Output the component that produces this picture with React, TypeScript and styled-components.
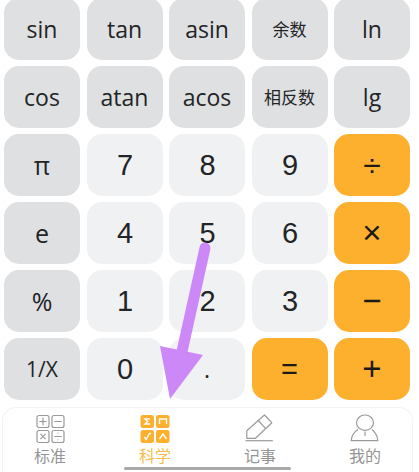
import styled, { createGlobalStyle } from "styled-components";

const GlobalStyle = createGlobalStyle`
    html, body {
        margin: 0;
        padding: 0;
        background: #fff;
        overflow: hidden;
    }
`

const Screen = styled.div`
    position: relative;
    width: 419px;
    height: 472px;
    overflow: hidden;
    display: flex;
    flex-direction: column;
    background: #fff;
    font-family: "Open Sans", "Noto Sans", "Noto Sans CJK SC", sans-serif;
`

const Keypad = styled.div`
    display: grid;
    grid-template-columns: repeat(5, 76px);
    grid-auto-rows: 62px;
    column-gap: 6.5px;
    row-gap: 6px;
    padding-left: 4px;
    margin-top: -2px;
`

type KeyKind = "fn" | "num" | "op"

const keyColors: Record<KeyKind, string> = {
    fn: "#dfe0e2",
    num: "#f0f1f3",
    op: "#fdb02d"
}

const Key = styled.div<{ $kind: KeyKind, $size?: number, $cjk?: boolean }>`
    display: flex;
    align-items: center;
    justify-content: center;
    border-radius: 15px;
    color: #222426;
    background-color: ${props => keyColors[props.$kind]};
    font-size: ${props => props.$size ?? 23}px;
    padding-bottom: ${props => props.$cjk ? 2 : 0}px;
    font-family: ${props => props.$cjk
        ? `"Noto Sans CJK SC", sans-serif`
        : `"Open Sans", "Noto Sans", sans-serif`};
`

const Digit = styled(Key)`
    font-family: "Liberation Sans", sans-serif;
    font-size: 29px;
    padding-left: 1px;
`

const Operator = styled(Key)`
    font-family: "Liberation Sans", sans-serif;
    color: #1c1a16;
`

const TabBar = styled.div`
    display: grid;
    grid-template-columns: repeat(4, 105px);
    justify-content: center;
    margin: 7px 6px 0 2px;
    height: 70px;
    border-top: 1px solid #f3f3f4;
    border-left: 1px solid #f3f3f4;
    border-right: 1px solid #f3f3f4;
    border-radius: 14px 14px 0 0;
    background: #fff;
`

const Tab = styled.div<{ $active?: boolean }>`
    display: flex;
    flex-direction: column;
    align-items: center;
    padding-top: 6px;
    color: ${props => props.$active ? "#f5bd4c" : "#959595"};
`

const TabLabel = styled.div`
    font-family: "Noto Sans CJK SC", sans-serif;
    font-size: 16px;
    line-height: 18px;
    margin-top: 2px;
`

const TabIcon = styled.svg`
    width: 30px;
    height: 30px;
    display: block;
`

const HomeIndicator = styled.div`
    position: absolute;
    left: 124px;
    bottom: 2px;
    width: 167px;
    height: 3px;
    border-radius: 2px;
    background: #a9a9a9;
`

const ArrowOverlay = styled.svg`
    position: absolute;
    left: 0;
    top: 0;
    width: 419px;
    height: 472px;
    pointer-events: none;
`

function StandardIcon() {
    return <TabIcon viewBox="0 0 30 30" fill="none" stroke="#9a9a9a" strokeWidth="1.2">
        <rect x="2" y="1.5" width="12" height="12" rx="2" />
        <rect x="17" y="1.5" width="12" height="12" rx="2" />
        <rect x="2" y="16.5" width="12" height="12" rx="2" />
        <rect x="17" y="16.5" width="12" height="12" rx="2" />
        <path d="M4.3 7.5h7.4M8 3.8v7.4M19.3 7.5h7.4M5.4 19.9l5.2 5.2M10.6 19.9l-5.2 5.2M19.3 22.5h7.4M23 18.8v.8M23 25.4v.8" />
    </TabIcon>
}

function ScienceIcon() {
    return <TabIcon viewBox="0 0 30 30" fill="none">
        <rect x="0.5" y="1" width="13.5" height="13" rx="2.5" fill="#fdb02d" />
        <rect x="16" y="1" width="13.5" height="13" rx="2.5" fill="#fdb02d" />
        <rect x="0.5" y="16" width="13.5" height="13" rx="2.5" fill="#fdb02d" />
        <rect x="16" y="16" width="13.5" height="13" rx="2.5" fill="#fdb02d" />
        <g stroke="#fff" strokeWidth="1.4">
            <path d="M10 5H5l2.6 2.5L5 10h5" />
            <path d="M19.5 10V5h7v5" />
            <path d="M4.5 23l1.6 2.5L9.5 19.5H11" />
            <path d="M19.5 25l3.5-5 3.5 5" />
        </g>
    </TabIcon>
}

function NoteIcon() {
    return <TabIcon viewBox="0 0 30 30" fill="none" stroke="#9a9a9a" strokeWidth="1.2" strokeLinejoin="round">
        <path d="M1.8 16.7L19.5 1l7.3 7.7L10.5 24.3H1.8z" />
        <path d="M12.8 6l7.7 8.3" />
        <path d="M0.5 26.7h27.3" />
    </TabIcon>
}

function ProfileIcon() {
    return <TabIcon viewBox="0 0 30 30" fill="none" stroke="#9a9a9a" strokeWidth="1.2">
        <ellipse cx="15" cy="8.7" rx="8.5" ry="7.7" />
        <path d="M8 15.5C4 18 1.5 22 1.2 26.7h26.6C27.5 22 25 18 22 15.5" />
        <path d="M15 17.5v4.5" />
    </TabIcon>
}

export default function App() {
    return <Screen>
        <GlobalStyle />
        <Keypad>
            <Key $kind="fn">sin</Key>
            <Key $kind="fn">tan</Key>
            <Key $kind="fn">asin</Key>
            <Key $kind="fn" $size={17} $cjk>余数</Key>
            <Key $kind="fn">ln</Key>

            <Key $kind="fn">cos</Key>
            <Key $kind="fn">atan</Key>
            <Key $kind="fn">acos</Key>
            <Key $kind="fn" $size={17} $cjk>相反数</Key>
            <Key $kind="fn">lg</Key>

            <Key $kind="fn" $size={25}>π</Key>
            <Digit $kind="num">7</Digit>
            <Digit $kind="num">8</Digit>
            <Digit $kind="num">9</Digit>
            <Operator $kind="op" $size={32}>÷</Operator>

            <Key $kind="fn" $size={25}>e</Key>
            <Digit $kind="num">4</Digit>
            <Digit $kind="num">5</Digit>
            <Digit $kind="num">6</Digit>
            <Operator $kind="op" $size={33}>×</Operator>

            <Key $kind="fn" $size={25}>%</Key>
            <Digit $kind="num">1</Digit>
            <Digit $kind="num">2</Digit>
            <Digit $kind="num">3</Digit>
            <Operator $kind="op" $size={33}>−</Operator>

            <Key $kind="fn" $size={21}>1/X</Key>
            <Digit $kind="num">0</Digit>
            <Key $kind="num" $size={23}>.</Key>
            <Operator $kind="op" $size={29}>=</Operator>
            <Operator $kind="op" $size={33}>+</Operator>
        </Keypad>
        <TabBar>
            <Tab><StandardIcon /><TabLabel>标准</TabLabel></Tab>
            <Tab $active><ScienceIcon /><TabLabel>科学</TabLabel></Tab>
            <Tab><NoteIcon /><TabLabel>记事</TabLabel></Tab>
            <Tab><ProfileIcon /><TabLabel>我的</TabLabel></Tab>
        </TabBar>
        <HomeIndicator />
        <ArrowOverlay viewBox="0 0 419 472">
            <path d="M205 248L181 356" stroke="#cd88f7" strokeWidth="11" strokeLinecap="round" fill="none" />
            <path d="M160 346L203 355L170 399Z" fill="#cd88f7" />
        </ArrowOverlay>
    </Screen>
}
